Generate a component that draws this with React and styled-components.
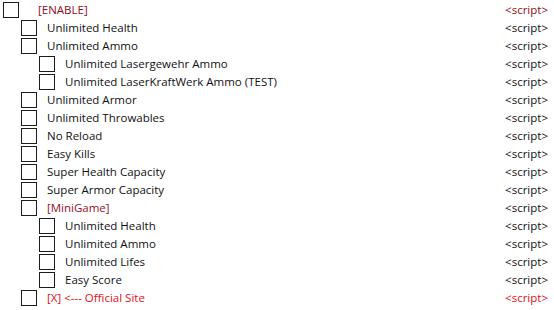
import React from "react";
import styled, { createGlobalStyle } from "styled-components";

const GlobalStyle = createGlobalStyle`
    body {
        margin: 0;
        background: #ffffff;
        font-family: "Open Sans", "Liberation Sans", sans-serif;
    }
`;

const Table = styled.div`
    width: 554px;
    height: 310px;
    padding-top: 1px;
    box-sizing: border-box;
    display: flex;
    flex-direction: column;
    overflow: hidden;
`;

const Row = styled.div`
    height: 18px;
    display: flex;
    align-items: center;
    padding-left: ${props => 3 + props.level * 18}px;
    padding-right: 6px;
`;

const Box = styled.div`
    width: 14px;
    height: 14px;
    border: 1px solid #1c1c1c;
    background: #ffffff;
    flex-shrink: 0;
`;

const Label = styled.div`
    flex: 1;
    margin-left: ${props => props.gap}px;
    padding-bottom: 2px;
    font-size: 11.5px;
    color: ${props => props.color};
    white-space: nowrap;
`;

const Value = styled.div`
    padding-bottom: 2px;
    font-size: 11.5px;
    color: ${props => props.color};
`;

const rows = [
    { level: 0, text: "[ENABLE]", color: "#8a1020", gap: 19 },
    { level: 1, text: "Unlimited Health" },
    { level: 1, text: "Unlimited Ammo" },
    { level: 2, text: "Unlimited Lasergewehr Ammo" },
    { level: 2, text: "Unlimited LaserKraftWerk Ammo (TEST)" },
    { level: 1, text: "Unlimited Armor" },
    { level: 1, text: "Unlimited Throwables" },
    { level: 1, text: "No Reload" },
    { level: 1, text: "Easy Kills" },
    { level: 1, text: "Super Health Capacity" },
    { level: 1, text: "Super Armor Capacity" },
    { level: 1, text: "[MiniGame]", color: "#960f28" },
    { level: 2, text: "Unlimited Health" },
    { level: 2, text: "Unlimited Ammo" },
    { level: 2, text: "Unlimited Lifes" },
    { level: 2, text: "Easy Score" },
    { level: 1, text: "[X] <--- Official Site", color: "#e0101a" },
];

const scriptColor = color => {
    if (color === "#8a1020") return "#8a1020";
    if (color === "#e0101a") return "#e0101a";
    return "#111111";
};

export default function App() {
    return (
        <>
            <GlobalStyle />
            <Table>
                {rows.map((r, i) => (
                    <Row key={i} level={r.level}>
                        <Box />
                        <Label gap={r.gap || 10} color={r.color || "#111111"}>
                            {r.text}
                        </Label>
                        <Value color={scriptColor(r.color)}>{"<script>"}</Value>
                    </Row>
                ))}
            </Table>
        </>
    );
}
